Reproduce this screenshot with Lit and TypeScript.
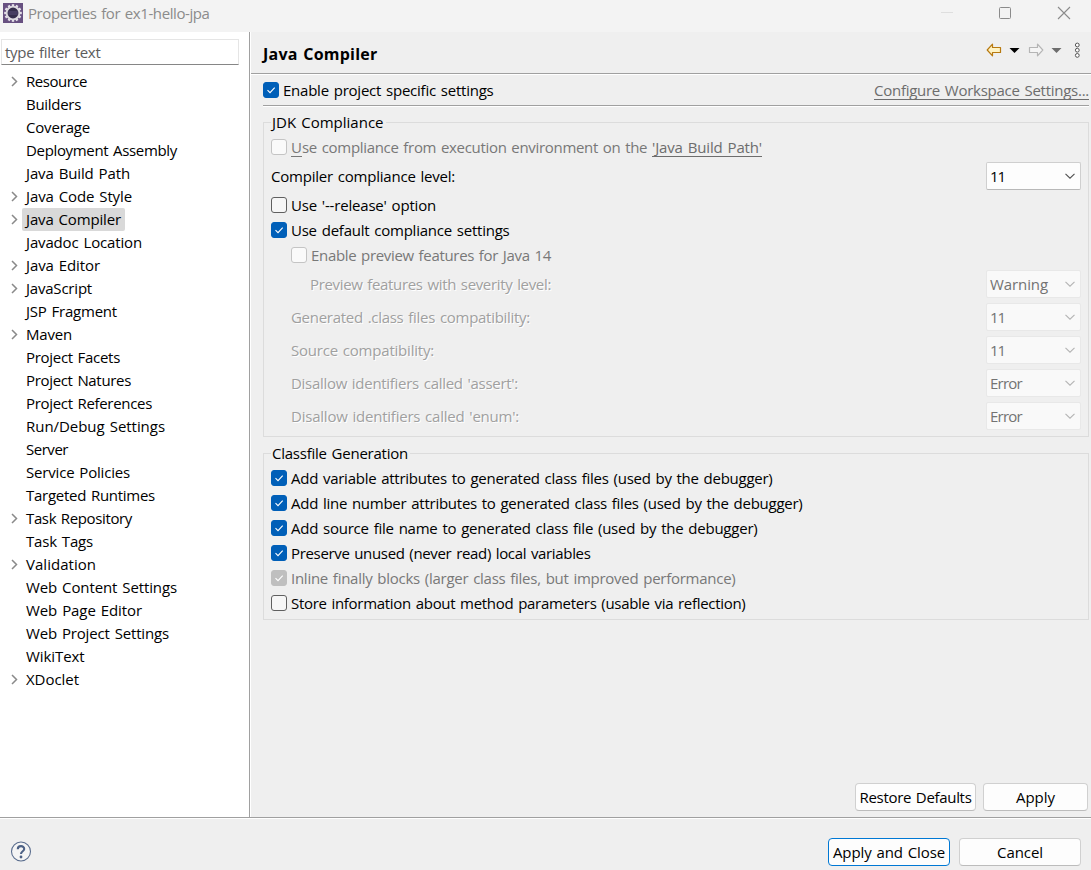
import { LitElement, html, css, svg, nothing } from "lit";
import { customElement, property } from "lit/decorators.js";

/** A run of text tracked so that it fills the given advance width. */
@customElement("fit-text")
class FitText extends LitElement {
  @property() text = "";
  @property({ type: Number }) w = 0;
  static styles = css`
    :host { display: inline-block; white-space: pre; word-spacing: 1.2px; }
  `;
  updated() {
    const span = this.renderRoot.querySelector("span") as HTMLElement;
    span.style.letterSpacing = "0px";
    const natural = span.getBoundingClientRect().width;
    const n = this.text.length;
    if (this.w && n) span.style.letterSpacing = `${(this.w - natural) / n}px`;
  }
  render() {
    return html`<span>${this.text}</span>`;
  }
}

@customElement("check-row")
class CheckRow extends LitElement {
  @property() text = "";
  @property({ type: Number }) w = 0;
  @property({ type: Boolean }) checked = false;
  @property({ type: Boolean }) off = false;
  static styles = css`
    :host { display: flex; align-items: center; height: 25px; gap: 4px; }
    .box { box-sizing: border-box; width: 16px; height: 16px; border: 1px solid #5f5f5f; border-radius: 3px; background: #f6f6f6; flex: none; margin-top: 1px; }
    .box.on { background: #005fb8; border-color: #005fb8; }
    .box.off { border-color: #c4c4c4; background: #fafafa; }
    .box.on.off { background: #bfbfbf; border-color: #bfbfbf; }
    svg { display: block; width: 14px; height: 14px; }
    .dim { color: #787878; }
  `;
  render() {
    return html`<div class="box ${this.checked ? "on" : ""} ${this.off ? "off" : ""}">
        ${this.checked ? html`<svg viewBox="0 0 14 14"><path d="M3.5 7.2 L6 9.6 L10.7 4.6" fill="none" stroke="#fff" stroke-width="1.1"/></svg>` : nothing}
      </div><slot class=${this.off ? "dim" : ""}><fit-text class=${this.off ? "dim" : ""} .text=${this.text} .w=${this.w}></fit-text></slot>`;
  }
}

@customElement("combo-box")
class ComboBox extends LitElement {
  @property() text = "";
  @property({ type: Number }) w = 0;
  @property({ type: Boolean }) off = false;
  static styles = css`
    :host { display: block; }
    .box { box-sizing: border-box; width: 95px; height: 28px; border: 1px solid #cfcfcf; border-bottom-color: #b8b8b8; border-radius: 2px; background: #fdfdfd; display: flex; align-items: center; justify-content: space-between; padding: 0 4px 0 3px; }
    .off { border-color: #e8e8e8; background: #f9f9f9; color: #737373; }
    svg { width: 12px; height: 12px; }
  `;
  render() {
    return html`<div class="box ${this.off ? "off" : ""}">
      <fit-text .text=${this.text} .w=${this.w}></fit-text>
      <svg viewBox="0 0 12 12"><path d="M1.5 3.8 L6 8.2 L10.5 3.8" fill="none" stroke=${this.off ? "#b4b4b4" : "#505050"} stroke-width="1.1"/></svg>
    </div>`;
  }
}

type Item = [string, number, boolean?];
const TREE: Item[] = [
  ["Resource", 61, true], ["Builders", 55], ["Coverage", 64], ["Deployment Assembly", 151],
  ["Java Build Path", 104], ["Java Code Style", 106, true], ["Java Compiler", 95, true],
  ["Javadoc Location", 116], ["Java Editor", 74, true], ["JavaScript", 66, true],
  ["JSP Fragment", 91], ["Maven", 46, true], ["Project Facets", 94], ["Project Natures", 105],
  ["Project References", 126], ["Run/Debug Settings", 139], ["Server", 42],
  ["Service Policies", 104], ["Targeted Runtimes", 129], ["Task Repository", 106, true],
  ["Task Tags", 67], ["Validation", 70, true], ["Web Content Settings", 151],
  ["Web Page Editor", 116], ["Web Project Settings", 143], ["WikiText", 58.5], ["XDoclet", 53, true],
];

const COMBOS: [string, number, string, number, boolean][] = [
  ["Preview features with severity level:", 241, "Warning", 58, true],
  ["Generated .class files compatibility:", 239, "11", 15, false],
  ["Source compatibility:", 143, "11", 15, false],
  ["Disallow identifiers called 'assert':", 227, "Error", 32, false],
  ["Disallow identifiers called 'enum':", 228, "Error", 32, false],
];

const CLASSFILE: [string, number, boolean, boolean][] = [
  ["Add variable attributes to generated class files (used by the debugger)", 481.5, true, false],
  ["Add line number attributes to generated class files (used by the debugger)", 511.5, true, false],
  ["Add source file name to generated class file (used by the debugger)", 466.5, true, false],
  ["Preserve unused (never read) local variables", 299.5, true, false],
  ["Inline finally blocks (larger class files, but improved performance)", 444.5, true, true],
  ["Store information about method parameters (usable via reflection)", 454.5, false, false],
];

const t = (text: string, w: number) => html`<fit-text .text=${text} .w=${w}></fit-text>`;

@customElement("app-root")
class AppRoot extends LitElement {
  static styles = css`
    :host { display: flex; flex-direction: column; width: 1091px; height: 870px; overflow: hidden; background: #efefef; color: #000; font: 15px/20px "Open Sans", "Noto Sans CJK KR", sans-serif; }
    svg { display: block; flex: none; }
    .title { box-sizing: border-box; height: 32px; flex: none; background: #f3f3f3; color: #8b8b8b; display: flex; align-items: flex-start; padding: 3px 20px 0 3px; }
    .title fit-text { margin: 0 0 0 5px; flex: 1; }
    .title .win { margin-top: 3px; }
    .main { display: flex; height: 785px; flex: none; border-bottom: 1px solid #a0a0a0; }
    .side { box-sizing: border-box; width: 250px; background: #fff; border-right: 1px solid #a0a0a0; padding-top: 7px; }
    .filter { box-sizing: border-box; width: 238px; height: 26px; margin-left: 1px; border: 1px solid #e5e5e5; border-bottom-color: #868686; color: #5c5c5c; padding: 2px 3px; }
    .tree { padding-top: 5px; }
    .node { display: flex; align-items: center; height: 23px; padding-left: 9px; }
    .arrow { width: 13px; flex: none; }
    .name { box-sizing: border-box; height: 23px; padding: 1px 4px; border-radius: 2px; }
    .sel { background: #d9d9d9; }
    .content { flex: 1; border-left: 1px solid #fff; display: flex; flex-direction: column; min-width: 0; }
    .head { box-sizing: border-box; height: 43px; flex: none; border-bottom: 1px solid #fff; box-shadow: inset 0 -1px #a0a0a0; display: flex; align-items: flex-start; padding: 10px 8px 0 12px; font-weight: 700; font-size: 16px; }
    .head fit-text { flex: 1; margin-top: 2px; }
    .body { padding: 0 2px 0 12px; flex: 1; display: flex; flex-direction: column; }
    .enable { box-sizing: border-box; height: 32px; border-bottom: 1px solid #fff; box-shadow: inset 0 -1px #a0a0a0; display: flex; justify-content: space-between; padding-top: 2px; }
    .link { border-bottom: 1px solid #6d6d6d; height: 19px; line-height: 20px; color: #6d6d6d; }
    .enable .link { margin-top: 3px; line-height: 20px; }
    fieldset { box-sizing: border-box; margin: 0; min-width: 0; border: 1px solid #dcdcdc; padding: 2px 7px 0; width: 826px; }
    legend { padding: 0 2px 0 1px; height: 20px; line-height: 20px; }
    .jdk { margin-top: 5px; height: 325px; }
    .cls { margin-top: 6px; height: 177px; }
    .row { display: flex; align-items: center; justify-content: space-between; height: 33px; padding-left: 20px; }
    .row.level { height: 28px; padding: 0; margin: 3px 0 2px; }
    .row.deep { padding-left: 39px; }
    .etched { color: #a0a0a0; text-shadow: 1px 1px #fff; }
    .indent { padding-left: 20px; }
    .env { display: flex; color: #787878; }
    .u { text-decoration: underline; text-underline-offset: 3px; }
    .buttons { display: flex; justify-content: flex-end; gap: 7px; margin-top: auto; padding: 0 1px 6px 0; }
    .btn { box-sizing: border-box; height: 28px; border: 1px solid #d0d0d0; border-bottom-color: #bcbcbc; border-radius: 4px; background: #fdfdfd; display: flex; justify-content: center; padding-top: 3px; }
    .default { border-color: #0078d4; }
    .b1 { width: 121px; } .b2 { width: 105px; } .b3 { width: 122px; }
    .foot { flex: 1; border-top: 1px solid #fff; display: flex; align-items: flex-start; gap: 9px; padding: 19px 10px 0 10px; }
    .help { margin: 3px auto 0 0; }
  `;

  gear() {
    const teeth = Array.from({ length: 12 }, (_, i) => svg`<rect x="8.8" y="1.2" width="2.4" height="3.4" fill="#e6e2ea" transform="rotate(${i * 30} 10 10)"/>`);
    return html`<svg width="20" height="20" viewBox="0 0 20 20"><rect width="20" height="20" fill="#675080"/>${teeth}
      <circle cx="10" cy="10" r="6.4" fill="#352d4c" stroke="#dcd8df" stroke-width="1.9"/><path d="M5.2 9h9.6M5.2 11h9.6" stroke="#5a4f78" stroke-width="1"/></svg>`;
  }

  render() {
    return html`
      <div class="title">${this.gear()}${t("Properties for ex1-hello-jpa", 181.5)}
        <svg class="win" width="130" height="16" viewBox="0 0 130 16">
          <path d="M0 6.5h12" stroke="#dedede"/>
          <rect x="58.5" y="1.5" width="11" height="11" rx="1" fill="none" stroke="#8b8b8b"/>
          <path d="M117 1l12 12M129 1l-12 12" stroke="#8b8b8b" stroke-width="1.1"/>
        </svg>
      </div>
      <div class="main">
        <div class="side">
          <div class="filter">${t("type filter text", 95.5)}</div>
          <div class="tree">
            ${TREE.map(([name, w, kids]) => html`<div class="node"><div class="arrow">
                ${kids ? html`<svg width="10" height="11" viewBox="0 0 10 11"><path d="M3 1 L7.5 5.5 L3 10" fill="none" stroke="#8a8a8a" stroke-width="1.5"/></svg>` : nothing}
              </div><div class="name ${name === "Java Compiler" ? "sel" : ""}">${t(name, w)}</div></div>`)}
          </div>
        </div>
        <div class="content">
          <div class="head">${t("Java Compiler", 114.5)}
            <svg width="98" height="18" viewBox="985 42 98 18">
              <path d="M987.2 50 L992.5 44.2 V47.5 H1000.5 V52.5 H992.5 V55.8 Z" fill="#fff3c4" stroke="#b87a10" stroke-width="1.2" stroke-linejoin="round"/>
              <path d="M1009.5 48h10l-5 5z" fill="#000"/>
              <path d="M1042.8 50 L1037.5 44.2 V47.5 H1029.5 V52.5 H1037.5 V55.8 Z" fill="#f5f5f5" stroke="#b5b5b5" stroke-width="1.2" stroke-linejoin="round"/>
              <path d="M1051.5 48h10l-5 5z" fill="#6d6d6d"/>
              <g fill="#fff" stroke="#555" stroke-width="1"><circle cx="1077.3" cy="45" r="1.9"/><circle cx="1077.3" cy="50.2" r="1.9"/><circle cx="1077.3" cy="55.4" r="1.9"/></g>
            </svg>
          </div>
          <div class="body">
            <div class="enable"><check-row checked .text=${"Enable project specific settings"} .w=${210.5}></check-row>
              <div class="link">${t("Configure Workspace Settings...", 215)}</div></div>
            <fieldset class="jdk">
              <legend>${t("JDK Compliance", 111.5)}</legend>
              <check-row off><div class="env"><fit-text class="u" .text=${"U"} .w=${11}></fit-text>${t("se compliance from execution environment on the ", 350)}<div class="link">${t("'Java Build Path'", 110)}</div></div></check-row>
              <div class="row level">${t("Compiler compliance level:", 184)}<combo-box .text=${"11"} .w=${15}></combo-box></div>
              <check-row .text=${"Use '--release' option"} .w=${145}></check-row>
              <check-row checked .text=${"Use default compliance settings"} .w=${218.5}></check-row>
              <check-row class="indent" off .text=${"Enable preview features for Java 14"} .w=${240}></check-row>
              ${COMBOS.map(([label, w, value, vw, deep]) => html`<div class="row ${deep ? "deep" : ""}"><span class="etched">${t(label, w)}</span><combo-box off .text=${value} .w=${vw}></combo-box></div>`)}
            </fieldset>
            <fieldset class="cls">
              <legend>${t("Classfile Generation", 136)}</legend>
              ${CLASSFILE.map(([label, w, on, off]) => html`<check-row ?checked=${on} ?off=${off} .text=${label} .w=${w}></check-row>`)}
            </fieldset>
            <div class="buttons"><div class="btn b1">${t("Restore Defaults", 112)}</div><div class="btn b2">${t("Apply", 39)}</div></div>
          </div>
        </div>
      </div>
      <div class="foot">
        <svg class="help" width="22" height="22" viewBox="0 0 22 22"><circle cx="11" cy="10.5" r="9.5" fill="#f4f4f4" stroke="#5a6d8e" stroke-width="1.1"/>
          <path d="M7.8 8.2 C7.8 4.2 14.2 4.2 14.2 7.9 C14.2 10.3 11 10.2 11 13" fill="none" stroke="#4d6185" stroke-width="2.1"/><circle cx="11" cy="16" r="1.4" fill="#4d6185"/></svg>
        <div class="btn b3 default">${t("Apply and Close", 112)}</div><div class="btn b3">${t("Cancel", 46)}</div>
      </div>`;
  }
}
